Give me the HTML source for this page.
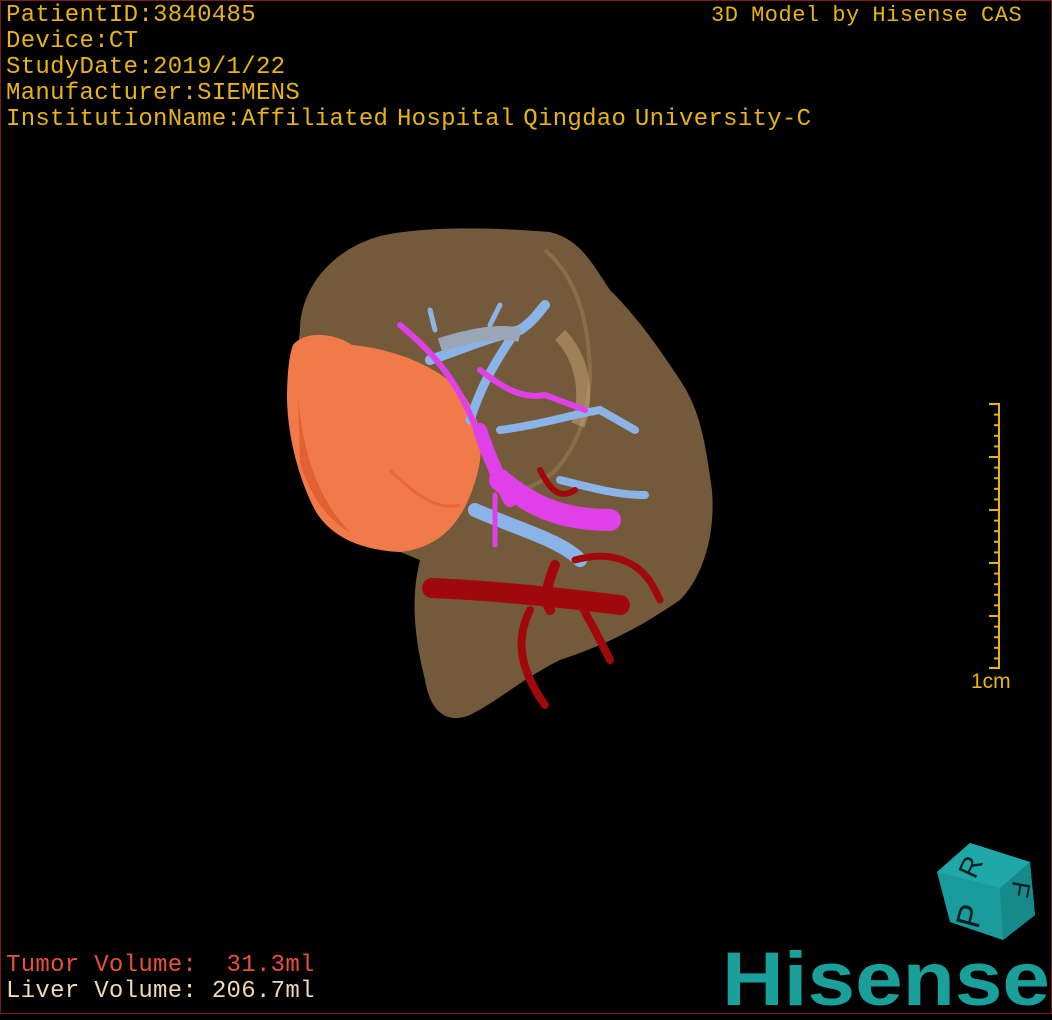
<!DOCTYPE html>
<html><head><meta charset="utf-8"><style>
html,body{margin:0;padding:0;background:#000;}
#f{position:relative;width:1052px;height:1020px;overflow:hidden;background:#000;}
.b{position:absolute;left:0;top:0;width:1050px;height:1012px;border:1px solid #7a1c1c;}
.t{position:absolute;font-family:"Liberation Mono",monospace;font-size:24px;line-height:26px;color:#e8b410;white-space:pre;letter-spacing:0.3px;}
svg{position:absolute;left:0;top:0;}
</style></head><body><div id="f">
<div class="b"></div>
<div class="t" style="left:6px;top:3px">PatientID:3840485
Device:CT
StudyDate:2019/1/22
Manufacturer:SIEMENS
<span style="word-spacing:-6px">InstitutionName:Affiliated Hospital Qingdao University-C</span></div>
<div class="t" style="left:711px;top:3px;font-size:22px;word-spacing:-1px;letter-spacing:0.5px">3D Model by Hisense CAS</div>
<div class="t" style="left:6px;top:953px;color:#e8503a">Tumor Volume:  31.3ml</div>
<div class="t" style="left:6px;top:979px;color:#f0d8b0">Liver Volume: 206.7ml</div>
<div class="t" style="left:971px;top:669px;font-family:'Liberation Sans',sans-serif;font-size:21px;color:#e8b410;letter-spacing:0">1cm</div>
<svg width="1052" height="1020" viewBox="0 0 1052 1020">
<path d="M300,330 C300,290 330,250 380,236 C430,225 500,228 550,232 C580,240 590,260 610,290 C640,320 660,350 680,380 C700,410 705,440 712,490 C716,540 700,580 680,600 C650,620 620,640 560,660 C520,680 500,700 470,715 C445,725 430,710 425,680 C415,640 410,600 420,560 C370,540 320,520 300,470 C290,420 295,370 300,330 Z" fill="#735a3a"/>
<path d="M545,250 C580,280 590,330 590,380 C585,440 560,480 520,490" fill="none" stroke="#9a7c55" stroke-width="4" opacity="0.6"/>
<path d="M560,335 C580,355 590,390 578,425" fill="none" stroke="#c8a878" stroke-width="14" opacity="0.5"/>
<path d="M293,345 C305,330 335,333 352,345 C385,348 425,360 455,385 C480,410 488,445 474,485 C462,522 440,548 400,552 C360,550 332,537 316,512 C300,482 288,440 287,400 C287,375 289,355 293,345 Z" fill="#f07a4a"/>
<path d="M298,395 C302,450 318,500 350,532 C328,522 308,492 300,462 Z" fill="#e05a30" opacity="0.8"/>
<path d="M390,470 C420,500 440,510 460,505" stroke="#e8683a" stroke-width="3" fill="none"/>
<g stroke="#8ab4e8" stroke-linecap="round" fill="none">
<path d="M475,510 C520,530 560,540 580,560" stroke-width="14"/>
<path d="M430,360 C460,350 480,340 520,330 C535,320 540,310 545,305" stroke-width="10"/>
<path d="M470,420 C480,390 490,370 510,340" stroke-width="9"/>
<path d="M500,430 C540,425 570,415 600,410 L635,430" stroke-width="8"/>
<path d="M560,480 C600,490 620,495 645,495" stroke-width="8"/>
<path d="M435,330 L430,310 M490,325 L500,305" stroke-width="5"/>
</g>
<path d="M440,345 C470,335 500,330 520,335" stroke="#9aa6b8" stroke-width="14" fill="none"/>
<g stroke="#e040e8" stroke-linecap="round" fill="none">
<path d="M500,480 C530,505 560,520 610,520" stroke-width="22"/>
<path d="M480,430 C490,460 500,480 510,500" stroke-width="14"/>
<path d="M400,325 C430,350 460,380 480,440" stroke-width="6"/>
<path d="M480,370 C500,385 520,400 545,395 L585,410" stroke-width="6"/>
<path d="M495,495 L495,545" stroke-width="5"/>
</g>
<g stroke="#a0080c" stroke-linecap="round" fill="none">
<path d="M432,588 C480,590 540,595 620,605" stroke-width="20"/>
<path d="M530,610 C515,640 520,670 545,705" stroke-width="8"/>
<path d="M575,595 C590,620 600,640 610,660" stroke-width="8"/>
<path d="M555,565 C545,590 545,600 550,610" stroke-width="10"/>
<path d="M575,560 C610,550 640,560 655,590 L660,600" stroke-width="7"/>
<path d="M540,470 C550,490 560,500 575,490" stroke-width="6"/>
</g>
</svg>
<svg width="1052" height="1020">
<line x1="999" y1="403" x2="999" y2="669" stroke="#e8b410" stroke-width="2"/>
<g stroke="#e8b410" stroke-width="2">
<line x1="989" y1="404" x2="999" y2="404"/><line x1="994" y1="414.6" x2="999" y2="414.6"/><line x1="994" y1="425.2" x2="999" y2="425.2"/><line x1="994" y1="435.8" x2="999" y2="435.8"/><line x1="994" y1="446.4" x2="999" y2="446.4"/>
<line x1="989" y1="457" x2="999" y2="457"/><line x1="994" y1="467.6" x2="999" y2="467.6"/><line x1="994" y1="478.2" x2="999" y2="478.2"/><line x1="994" y1="488.8" x2="999" y2="488.8"/><line x1="994" y1="499.4" x2="999" y2="499.4"/>
<line x1="989" y1="510" x2="999" y2="510"/><line x1="994" y1="520.6" x2="999" y2="520.6"/><line x1="994" y1="531.2" x2="999" y2="531.2"/><line x1="994" y1="541.8" x2="999" y2="541.8"/><line x1="994" y1="552.4" x2="999" y2="552.4"/>
<line x1="989" y1="563" x2="999" y2="563"/><line x1="994" y1="573.6" x2="999" y2="573.6"/><line x1="994" y1="584.2" x2="999" y2="584.2"/><line x1="994" y1="594.8" x2="999" y2="594.8"/><line x1="994" y1="605.4" x2="999" y2="605.4"/>
<line x1="989" y1="616" x2="999" y2="616"/><line x1="994" y1="626.6" x2="999" y2="626.6"/><line x1="994" y1="637.2" x2="999" y2="637.2"/><line x1="994" y1="647.8" x2="999" y2="647.8"/><line x1="994" y1="658.4" x2="999" y2="658.4"/>
<line x1="989" y1="668" x2="999" y2="668"/>
</g>
<polygon points="970,843 1030,862 1035,915 1003,940 950,922 937,872" fill="#1a9a9a"/>
<polygon points="970,843 1030,862 1000,888 937,872" fill="#20a8a8"/>
<polygon points="1000,888 1030,862 1035,915 1003,940" fill="#168a8a"/>
<text font-family="Liberation Sans,sans-serif" font-size="34" fill="#0a2020" transform="translate(978,930) rotate(-75)">P</text>
<text font-family="Liberation Sans,sans-serif" font-size="28" fill="#0a2020" transform="translate(975,880) rotate(-65)">R</text>
<text font-family="Liberation Sans,sans-serif" font-size="26" fill="#0a2020" transform="translate(1013,880) rotate(100)">F</text>
<text x="722" y="1005" font-family="Liberation Sans,sans-serif" font-weight="bold" font-size="76" fill="#1aa09a" textLength="328" lengthAdjust="spacingAndGlyphs">Hisense</text>
</svg>
</div></body></html>
